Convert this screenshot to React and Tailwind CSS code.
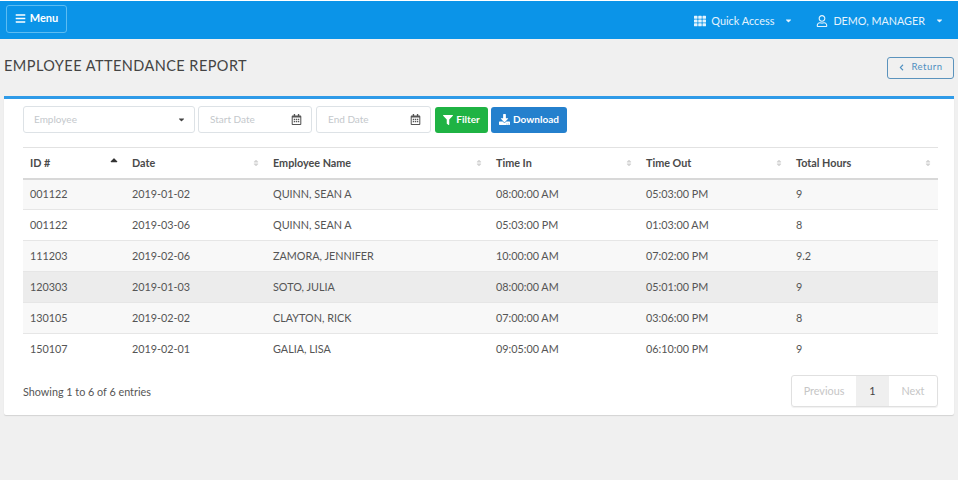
import React from "react";
import { FaTh, FaFilter, FaDownload, FaBars, FaRegCalendarAlt, FaRegUser, FaChevronLeft, FaCaretDown, FaSortUp, FaSort } from "react-icons/fa";

const rows = [
  { id: "001122", date: "2019-01-02", name: "QUINN, SEAN A", timeIn: "08:00:00 AM", timeOut: "05:03:00 PM", hours: "9" },
  { id: "001122", date: "2019-03-06", name: "QUINN, SEAN A", timeIn: "05:03:00 PM", timeOut: "01:03:00 AM", hours: "8" },
  { id: "111203", date: "2019-02-06", name: "ZAMORA, JENNIFER", timeIn: "10:00:00 AM", timeOut: "07:02:00 PM", hours: "9.2" },
  { id: "120303", date: "2019-01-03", name: "SOTO, JULIA", timeIn: "08:00:00 AM", timeOut: "05:01:00 PM", hours: "9" },
  { id: "130105", date: "2019-02-02", name: "CLAYTON, RICK", timeIn: "07:00:00 AM", timeOut: "03:06:00 PM", hours: "8" },
  { id: "150107", date: "2019-02-01", name: "GALIA, LISA", timeIn: "09:05:00 AM", timeOut: "06:10:00 PM", hours: "9" },
];

const columns = [
  { label: "ID #", width: "w-[102px]", active: true },
  { label: "Date", width: "w-[141px]" },
  { label: "Employee Name", width: "w-[223px]" },
  { label: "Time In", width: "w-[150px]" },
  { label: "Time Out", width: "w-[150px]" },
  { label: "Total Hours", width: "w-[149px]" },
];

const rowBg = ["bg-[#f8f8f8]", "bg-white", "bg-[#f8f8f8]", "bg-[#ececec]", "bg-[#f8f8f8]", "bg-white"];

const DateInput = ({ label, className }) => (
  <div className={`flex h-[27px] items-center justify-between rounded-[3px] border border-[#dde2e6] bg-white pl-[11px] pr-[9px] text-[10px] text-[#c4c8cc] ${className}`}>
    <span>{label}</span>
    <FaRegCalendarAlt className="text-[11px] text-[#555]" />
  </div>
);

export default function App() {
  return (
    <div className="flex h-[480px] w-[958px] flex-col overflow-hidden bg-[#f0f0f0] font-['Lato',sans-serif] text-[#555]">
      {/* top bar */}
      <div className="border-t border-white">
        <div className="flex h-[38px] items-center justify-between bg-[#0b94e8] pl-[6px] pr-[14px] text-white">
          <button className="mb-[3px] flex h-[28px] w-[61px] items-center justify-center gap-[4px] rounded-[3px] border border-[#5cbcf2] text-[11px] font-bold">
            <FaBars className="text-[11px]" />
            Menu
          </button>
          <div className="mt-[2px] flex items-center text-[#e4f3fd]">
            <FaTh className="mr-[5px] text-[12px]" />
            <span className="text-[10.9px]">Quick Access</span>
            <FaCaretDown className="ml-[10px] text-[9px]" />
            <FaRegUser className="ml-[23px] mr-[5px] text-[12px]" />
            <span className="text-[10.8px]">DEMO, MANAGER</span>
            <FaCaretDown className="ml-[10px] text-[9px]" />
          </div>
        </div>
      </div>

      {/* page title */}
      <div className="flex h-[57px] items-center justify-between pl-[4px] pr-[4px]">
        <h1 className="mb-[4px] text-[14.5px] font-normal tracking-[0.45px] text-[#444]">EMPLOYEE ATTENDANCE REPORT</h1>
        <button className="flex h-[22px] w-[67px] items-center justify-center gap-[6px] rounded-[3px] border border-[#5b93bd] text-[9.5px] tracking-[0.5px] text-[#4f8fc0]">
          <FaChevronLeft className="text-[7px]" />
          Return
        </button>
      </div>

      {/* card */}
      <div className="mx-[4px] h-[319px] rounded-b-[2px] border-t-[3px] border-[#2f9be8] bg-white px-[19px] pt-[7px] shadow-[0_1px_1px_rgba(0,0,0,0.12)]">
        <div className="flex items-center gap-[3px]">
          <div className="flex h-[27px] w-[172px] items-center justify-between rounded-[3px] border border-[#dde2e6] pl-[10px] pr-[8px] text-[10px] text-[#c4c8cc]">
            <span>Employee</span>
            <FaCaretDown className="text-[9px] text-[#444]" />
          </div>
          <DateInput label="Start Date" className="w-[114px]" />
          <DateInput label="End Date" className="ml-[1px] w-[115px]" />
          <button className="ml-[1px] flex h-[26px] w-[53px] items-center justify-center gap-[3px] rounded-[3px] bg-[#1fb344] text-[10px] font-bold text-white">
            <FaFilter className="text-[10px]" />
            Filter
          </button>
          <button className="flex h-[26px] w-[76px] items-center justify-center gap-[3px] rounded-[3px] bg-[#2480cd] text-[10px] font-bold text-white">
            <FaDownload className="text-[11px]" />
            Download
          </button>
        </div>

        <table className="mt-[14px] w-[915px] table-fixed border-collapse text-[10.8px]">
          <thead>
            <tr className="h-[31px] border-y border-y-[#e2e2e2] border-b-[#d8d8d8] border-b-2">
              {columns.map((col) => (
                <th key={col.label} className={`${col.width} pl-[7px] pr-[6px] text-left font-bold text-[#4a4a4a]`}>
                  <div className="flex items-center justify-between">
                    <span>{col.label}</span>
                    {col.active ? (
                      <FaSortUp className="relative left-[1px] text-[12px] text-[#333]" />
                    ) : (
                      <FaSort className="text-[8px] text-[#d2d2d2]" />
                    )}
                  </div>
                </th>
              ))}
            </tr>
          </thead>
          <tbody>
            {rows.map((row, i) => (
              <tr key={i} className={`h-[31px] border-b border-[#e6e6e6] last:border-b-transparent ${rowBg[i]}`}>
                <td className="px-[7px]">{row.id}</td>
                <td className="px-[7px]">{row.date}</td>
                <td className="px-[7px]">{row.name}</td>
                <td className="px-[7px]">{row.timeIn}</td>
                <td className="px-[7px]">{row.timeOut}</td>
                <td className="px-[7px]">{row.hours}</td>
              </tr>
            ))}
          </tbody>
        </table>

        {/* footer */}
        <div className="mt-[10px] flex w-[915px] items-center justify-between">
          <span className="pt-[2px] text-[10.8px]">Showing 1 to 6 of 6 entries</span>
          <div className="flex h-[32px] items-stretch overflow-hidden rounded-[3px] border border-[#e0e0e0] text-[10.8px] text-[#c6c6c6] shadow-[0_1px_1px_rgba(0,0,0,0.06)]">
            <span className="flex w-[64px] items-center justify-center">Previous</span>
            <span className="flex w-[33px] items-center justify-center bg-[#efefef] text-[#444]">1</span>
            <span className="flex w-[48px] items-center justify-center">Next</span>
          </div>
        </div>
      </div>
    </div>
  );
}
